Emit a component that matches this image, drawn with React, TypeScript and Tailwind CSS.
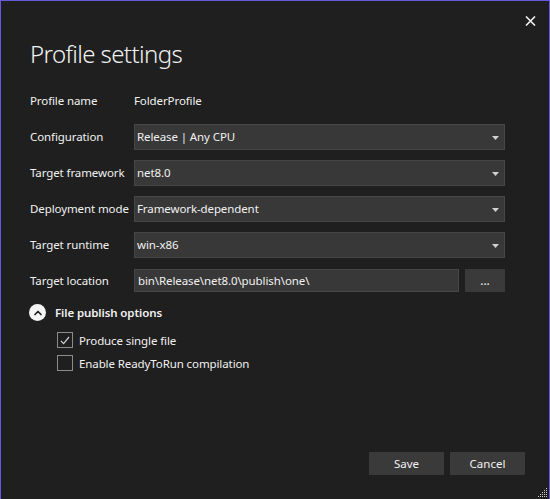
import { ChevronUp } from 'lucide-react';

const font = { fontFamily: '"Noto Sans", "Open Sans", sans-serif' };

function Dropdown({ value }: { value: string }) {
  return (
    <div className="flex h-[26px] items-center justify-between border border-[#464646] bg-[#383838] pl-[2px] pr-[5px] text-[11.5px] tracking-[-0.1px] text-[#f1f1f1]">
      <span>{value}</span>
      <svg width="7" height="4" viewBox="0 0 7 4" className="mt-[1px]">
        <path d="M0 0h7L3.5 4z" fill="#d0d0d0" />
      </svg>
    </div>
  );
}

function Check({ checked, label }: { checked?: boolean; label: string }) {
  return (
    <div className="flex h-[16px] items-center gap-[6px]">
      <div className="flex h-[16px] w-[16px] items-center justify-center border border-[#8b8b8b]">
        {checked && (
          <svg width="10" height="9" viewBox="0 0 10 9">
            <path d="M1 5l2.6 2.6L9 1" fill="none" stroke="#d0d0d0" strokeWidth="1.2" />
          </svg>
        )}
      </div>
      <span className="text-[11.5px] tracking-[-0.1px] text-[#f1f1f1]">{label}</span>
    </div>
  );
}

const rows: [string, string][] = [
  ['Configuration', 'Release | Any CPU'],
  ['Target framework', 'net8.0'],
  ['Deployment mode', 'Framework-dependent'],
  ['Target runtime', 'win-x86'],
];

export default function App() {
  return (
    <div
      className="relative flex h-[499px] w-[550px] flex-col border border-b-0 border-[#6659dc] bg-[#1f1f1f] text-[#f1f1f1]"
      style={font}
    >
      {/* Close */}
      <div className="flex justify-end pr-[13px] pt-[15px]">
        <svg width="11" height="10" viewBox="0 0 11 10">
          <path d="M1 0.5l9 9M10 0.5l-9 9" stroke="#f0f0f0" strokeWidth="1.6" />
        </svg>
      </div>

      <div className="flex flex-1 flex-col pl-[29px] pr-[44px]">
        <h1 className="mt-[11px] text-[24px] font-light leading-[34px] tracking-[-0.6px] text-[#f1f1f1]">
          Profile settings
        </h1>

        <div className="mt-[17px] grid grid-cols-[104px_1fr] items-center gap-y-[10px] text-[11.5px] tracking-[-0.1px]">
          <span className="h-[26px] leading-[26px]">Profile name</span>
          <span className="h-[26px] leading-[26px]">FolderProfile</span>
          {rows.map(([label, value]) => (
            <div key={label} className="contents">
              <span className="whitespace-nowrap">{label}</span>
              <Dropdown value={value} />
            </div>
          ))}
          <span className="mt-[1px]">Target location</span>
          <div className="mt-[1px] flex gap-[6px]">
            <div className="flex h-[23px] flex-1 items-center border border-[#464646] bg-[#383838] pl-[3px]">
              bin\Release\net8.0\publish\one\
            </div>
            <button className="flex h-[23px] w-[40px] items-end justify-center bg-[#3a3a3a] pb-[5px] text-[12px] leading-none">
              ...
            </button>
          </div>
        </div>

        <div className="mt-[12px] flex items-center gap-[9px]">
          <div className="-ml-[1px] flex h-[17px] w-[17px] items-center justify-center rounded-full bg-[#f4f4f4]">
            <ChevronUp size={12} strokeWidth={3.5} color="#1f1f1f" />
          </div>
          <span className="text-[11.5px] font-semibold tracking-[-0.1px]">File publish options</span>
        </div>

        <div className="mt-[11px] flex flex-col gap-[7px] pl-[27px]">
          <Check checked label="Produce single file" />
          <Check label="Enable ReadyToRun compilation" />
        </div>

        <div className="mt-auto mb-[24px] -mr-[20px] flex justify-end gap-[6px]">
          <button className="h-[23px] w-[75px] bg-[#3a3a3a] text-[11.5px]">Save</button>
          <button className="h-[23px] w-[75px] bg-[#3a3a3a] text-[11.5px]">Cancel</button>
        </div>
      </div>

      {/* Resize grip */}
      <svg width="12" height="12" viewBox="0 0 12 12" className="absolute bottom-[1px] right-[1px]">
        {[
          [10, 2],
          [8, 4], [10, 4],
          [6, 6], [8, 6], [10, 6],
          [4, 8], [6, 8], [8, 8], [10, 8],
          [2, 10], [4, 10], [6, 10], [8, 10], [10, 10],
        ].map(([x, y]) => (
          <rect key={`${x}-${y}`} x={x} y={y} width="1" height="1" fill="#cfcfcf" />
        ))}
      </svg>
    </div>
  );
}
